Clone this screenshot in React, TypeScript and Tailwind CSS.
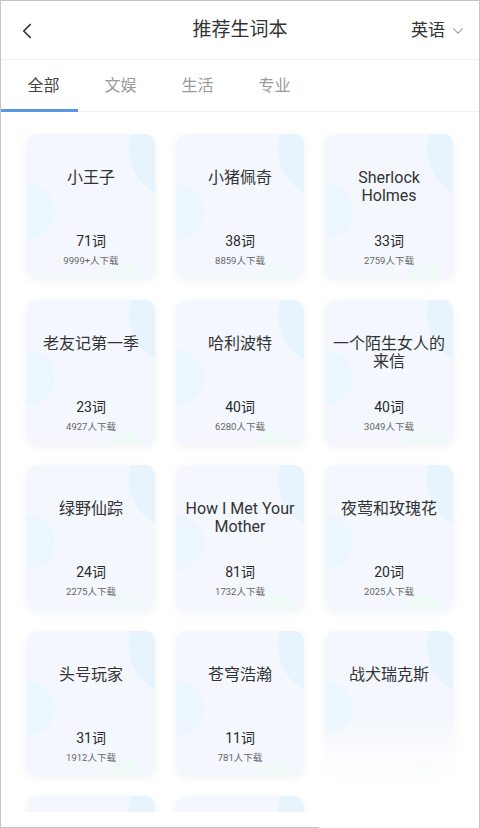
import { ChevronLeft, ChevronDown } from 'lucide-react';

type Book = { title: string; count?: number; downloads?: string };

const books: Book[] = [
  { title: '小王子', count: 71, downloads: '9999+' },
  { title: '小猪佩奇', count: 38, downloads: '8859' },
  { title: 'Sherlock Holmes', count: 33, downloads: '2759' },
  { title: '老友记第一季', count: 23, downloads: '4927' },
  { title: '哈利波特', count: 40, downloads: '6280' },
  { title: '一个陌生女人的来信', count: 40, downloads: '3049' },
  { title: '绿野仙踪', count: 24, downloads: '2275' },
  { title: 'How I Met Your Mother', count: 81, downloads: '1732' },
  { title: '夜莺和玫瑰花', count: 20, downloads: '2025' },
  { title: '头号玩家', count: 31, downloads: '1912' },
  { title: '苍穹浩瀚', count: 11, downloads: '781' },
  { title: '战犬瑞克斯' },
  { title: '' },
  { title: '' },
];

const tabs = ['全部', '文娱', '生活', '专业'];

function BookCard({ book }: { book: Book }) {
  return (
    <div className="relative h-[144px] overflow-hidden rounded-[10px] bg-[#f4f8fe] shadow-[0_3px_8px_rgba(60,90,130,0.08)]">
      <div className="absolute left-[102px] top-[-35px] h-[100px] w-[100px] rounded-full bg-[#e7f3fd]" />
      <div className="absolute left-[-27px] top-[50px] h-[55px] w-[55px] rounded-full bg-[#ecf6fe]" />
      <div className="absolute left-[79px] top-[130px] h-[40px] w-[40px] rounded-full bg-[#eef9f8]" />
      <div className="relative flex h-full flex-col items-center px-[7px]">
        <div className="mt-[35px] text-center text-[16px] leading-[18px] text-[#333]">{book.title}</div>
        {book.count !== undefined && (
          <>
            <div className="absolute top-[97px] text-[14px] leading-[20px] text-[#2a2a2a]">
              {book.count}词
            </div>
            <div className="absolute top-[121px] text-[9.5px] leading-[12px] text-[#666]">
              {book.downloads}人下载
            </div>
          </>
        )}
      </div>
    </div>
  );
}

export default function App() {
  return (
    <div
      className="relative flex h-[828px] w-[480px] flex-col overflow-hidden border-l border-r border-t border-[#c4c4c4] bg-white"
      style={{ fontFamily: 'Roboto, "Noto Sans CJK SC", sans-serif' }}
    >
      <header className="relative flex h-[59px] shrink-0 items-center justify-center border-b border-[#f4f4f4]">
        <ChevronLeft className="absolute left-[13px] top-[17px] h-[26px] w-[26px] text-[#333]" strokeWidth={1.6} />
        <h1 className="text-[19px] text-[#333]">推荐生词本</h1>
        <div className="absolute right-[12px] top-[17px] flex items-center gap-[4px]">
          <span className="text-[17px] text-[#333]">英语</span>
          <ChevronDown className="h-[18px] w-[18px] text-[#888]" strokeWidth={1.4} />
        </div>
      </header>

      <nav className="relative flex h-[52px] shrink-0 items-center border-b border-[#f2f2f2] pl-[4px]">
        {tabs.map((t, i) => (
          <div
            key={t}
            className={
              i === 0
                ? 'w-[77px] text-center text-[16px] text-[#444]'
                : 'w-[77px] text-center text-[16px] text-[#9a9a9a]'
            }
          >
            {t}
          </div>
        ))}
        <div className="absolute bottom-[-1px] left-0 h-[3px] w-[77px] bg-[#5a97e3]" />
      </nav>

      <main className="flex-1 overflow-hidden">
        <div className="grid grid-cols-3 gap-x-[21px] gap-y-[21.5px] px-[26px] pt-[22px]">
          {books.map((b, i) => (
            <BookCard key={i} book={b} />
          ))}
        </div>
      </main>
      <div className="h-[16px] shrink-0 border-b border-[#c4c4c4]" />

      <div className="absolute bottom-0 left-[318px] right-[-1px] top-[718px] bg-gradient-to-b from-white/0 via-white/90 to-white" />
    </div>
  );
}
